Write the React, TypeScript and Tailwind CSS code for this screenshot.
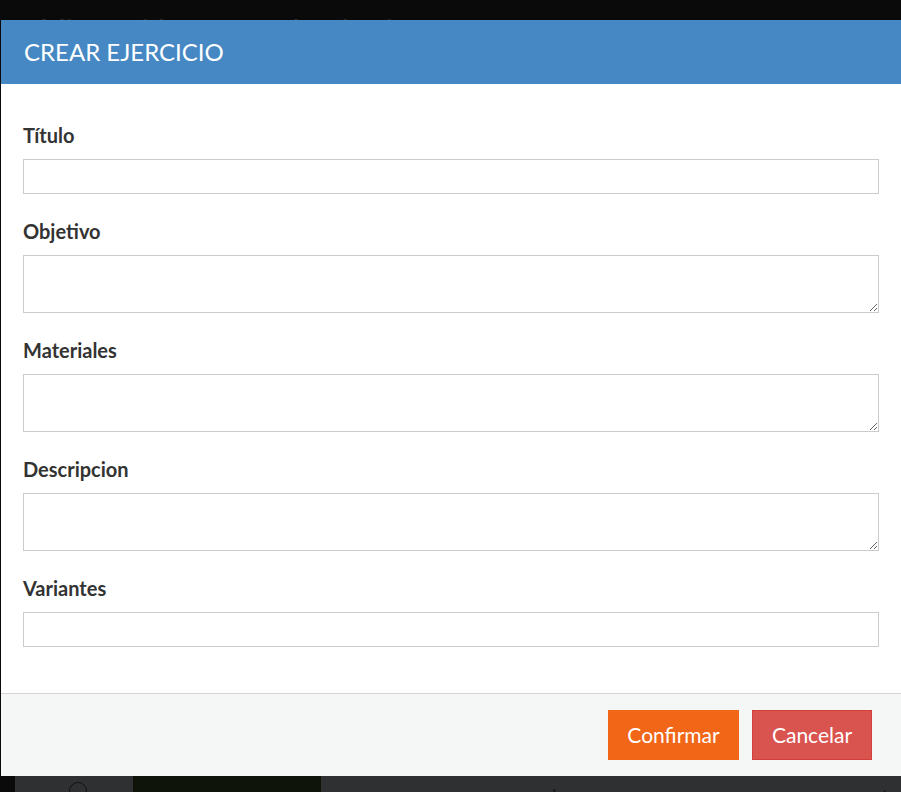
import React from 'react';

const fields = [
  { label: 'Título', type: 'input' },
  { label: 'Objetivo', type: 'textarea' },
  { label: 'Materiales', type: 'textarea' },
  { label: 'Descripcion', type: 'textarea' },
  { label: 'Variantes', type: 'input' },
];

const App: React.FC = () => {
  return (
    <div className="relative h-[792px] w-[901px] overflow-hidden bg-[#0a0a0a] font-['Lato','Liberation_Sans',sans-serif]">
      {/* Page behind the modal */}
      <div className="flex h-full flex-col">
        <div className="h-[20px] overflow-hidden pl-[40px] pt-[12px] text-[28px] leading-[34px] text-[#2e2e2e]">
          <span>Mis partidas</span>
          <span className="ml-[96px]">Academia</span>
        </div>
        <div className="h-[756px]" />
        <div className="ml-[15px] flex flex-1 items-start overflow-hidden bg-[#2f3032]">
          <div className="ml-[54px] mt-[6px] h-[20px] w-[18px] shrink-0 rounded-full border border-[#111]" />
          <div className="ml-[46px] h-full w-[188px] shrink-0 bg-[#0f140b]" />
          <span className="ml-[195px] mt-[8px] text-[18px] leading-[22px] text-[#111]">prueba</span>
          <span className="ml-[282px] mt-[8px] text-[18px] leading-[22px] text-[#111]">cont</span>
        </div>
      </div>

      {/* Modal */}
      <div className="absolute left-[1px] right-0 top-[20px] flex h-[756px] flex-col bg-white">
        <div className="flex h-[64px] items-center bg-[#4588c3] px-[23px]">
          <h2 className="text-[24px] leading-none text-white">CREAR EJERCICIO</h2>
        </div>

        <div className="flex flex-1 flex-col gap-[25px] px-[22px] pt-[39px]">
          {fields.map((f) => (
            <div key={f.label} className="flex flex-col">
              <label className="mb-[12px] text-[20px] font-bold leading-[24px] text-[#333]">{f.label}</label>
              {f.type === 'input' ? (
                <input
                  type="text"
                  className="h-[35px] w-full border border-[#ccc] px-[10px] text-[16px] outline-none"
                />
              ) : (
                <textarea className="h-[58px] w-full resize-y border border-[#ccc] px-[10px] text-[16px] outline-none" />
              )}
            </div>
          ))}
        </div>

        <div className="flex h-[83px] items-start justify-end gap-[13px] border-t border-[#d4d4d4] bg-[#f5f6f6] pr-[29px] pt-[16px]">
          <button className="h-[50px] w-[131px] bg-[#f26618] text-[21px] text-white">Confirmar</button>
          <button className="h-[50px] w-[120px] border border-[#d43f3a] bg-[#d9534f] text-[21px] text-white">Cancelar</button>
        </div>
      </div>
    </div>
  );
};

export default App;
